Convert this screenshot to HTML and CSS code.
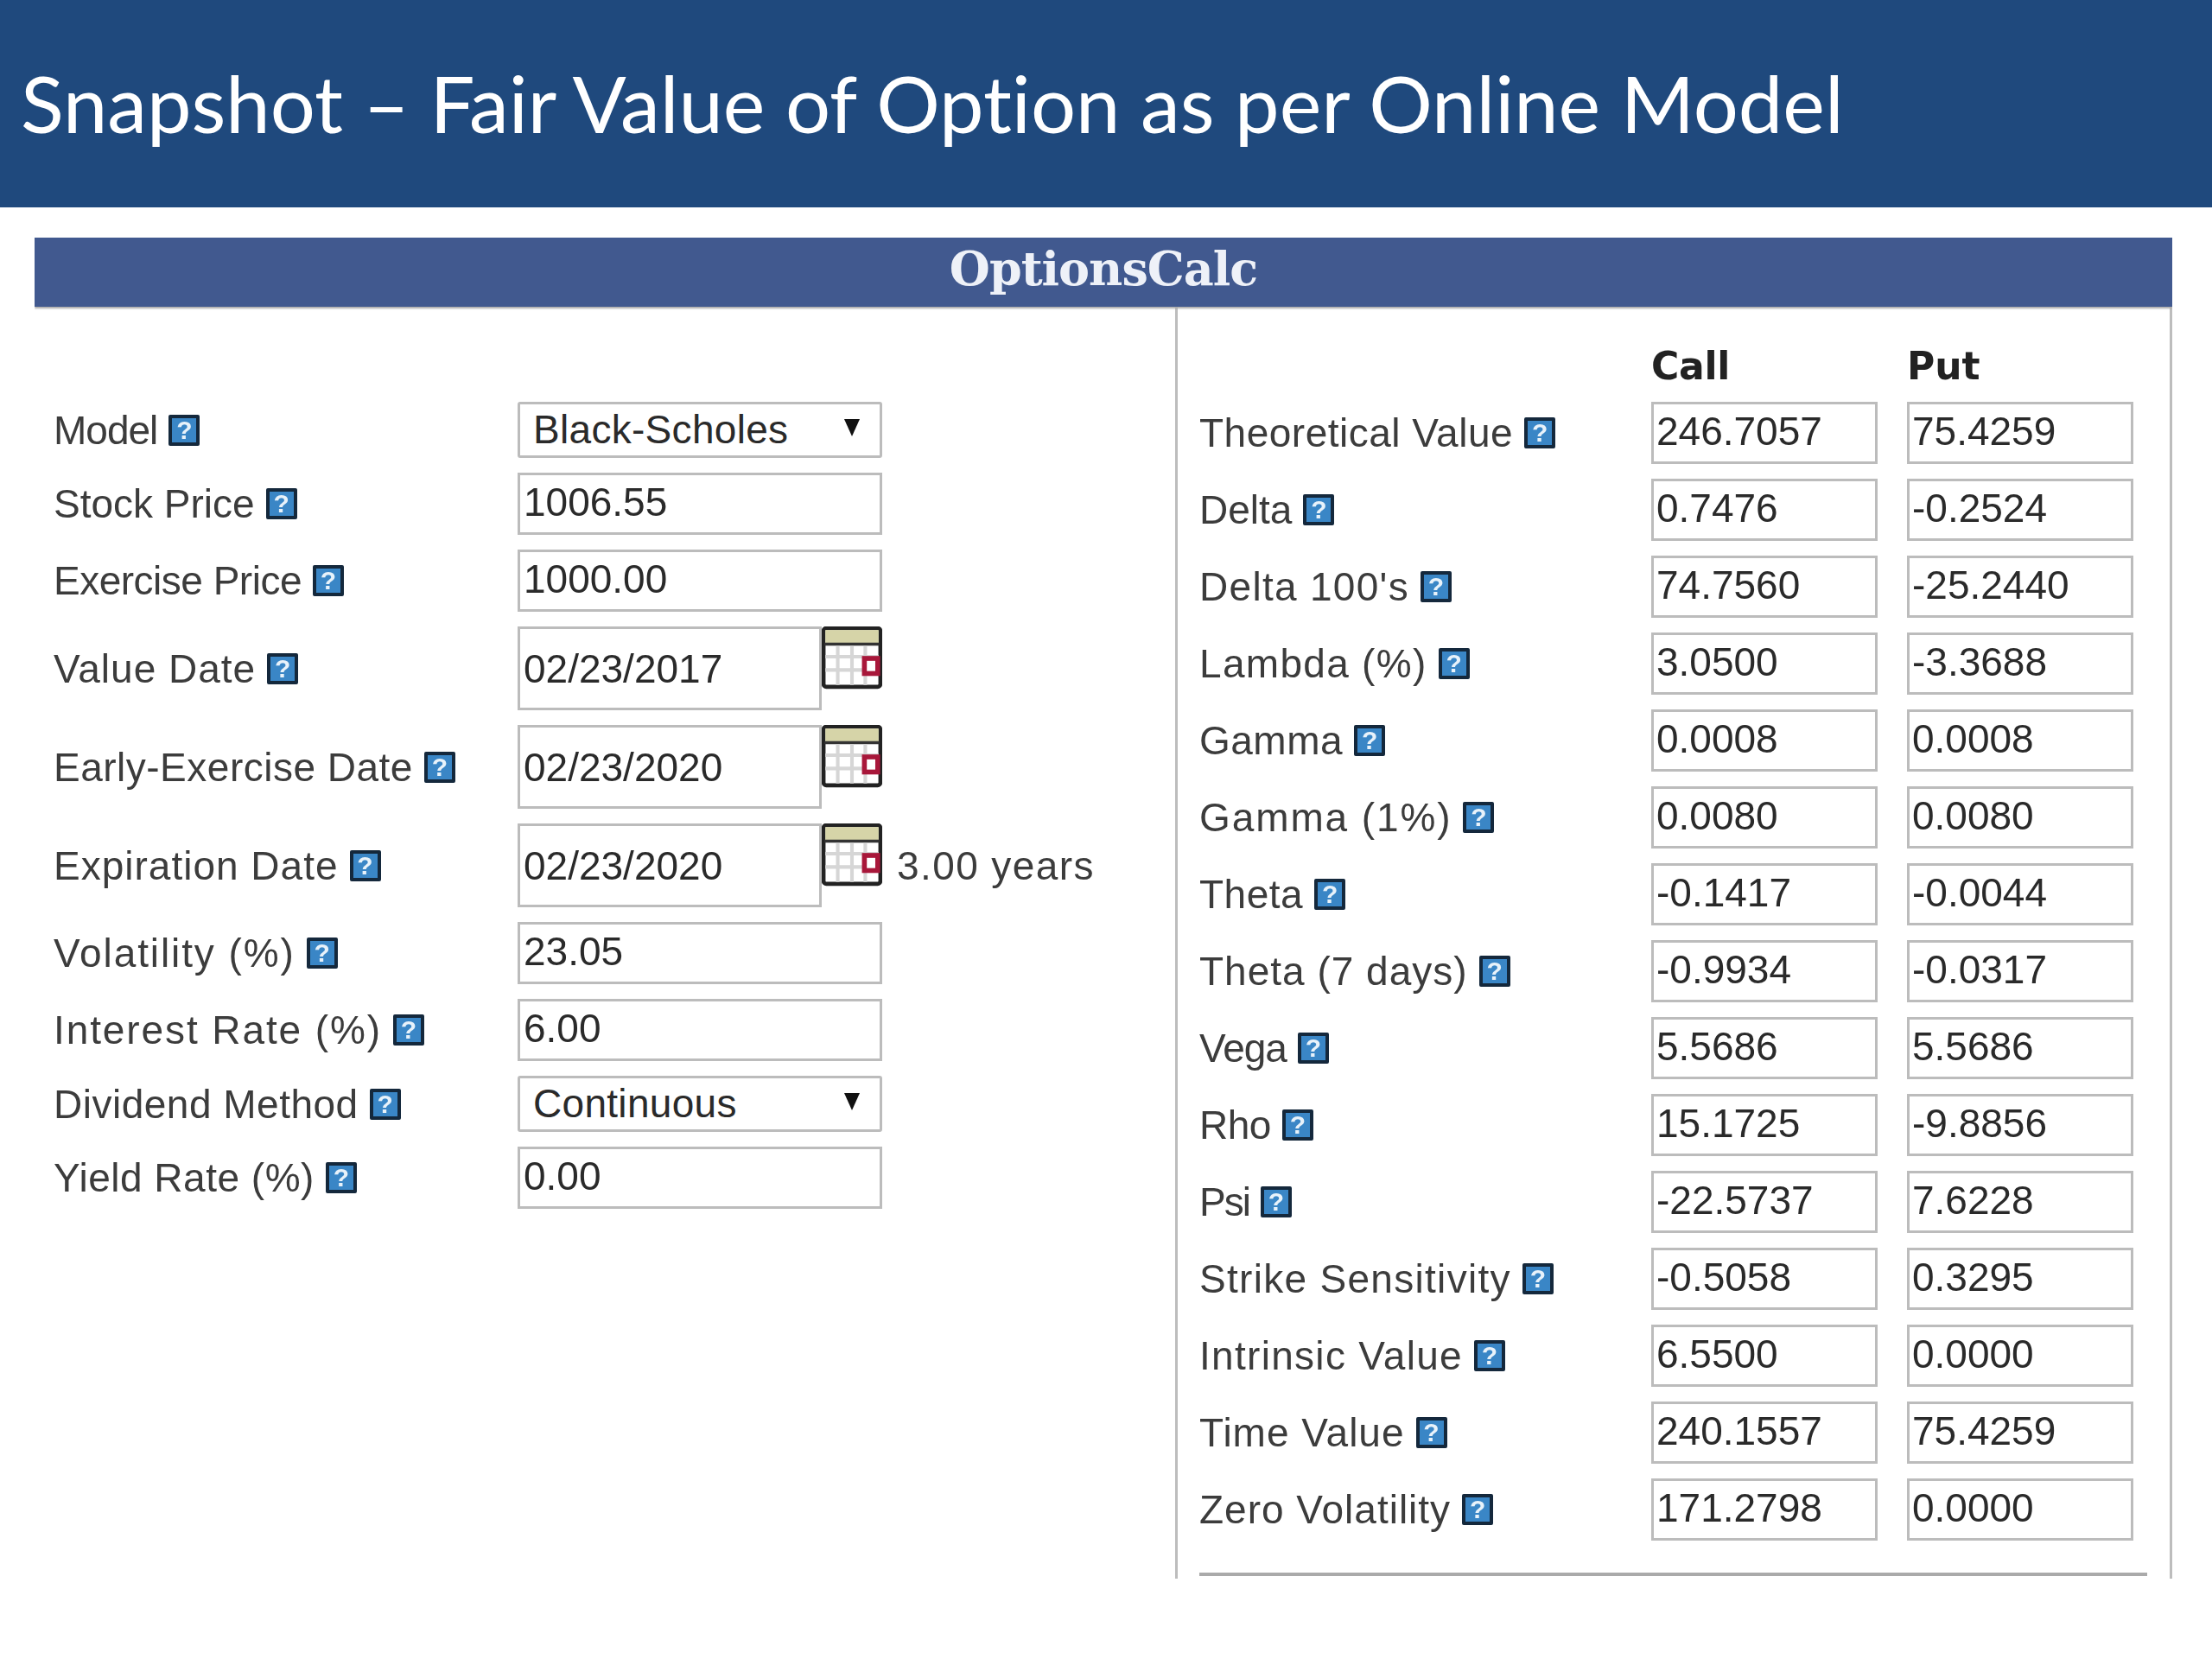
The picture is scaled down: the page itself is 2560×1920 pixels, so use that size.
FILE: index.html
```html
<!DOCTYPE html>
<html lang="en">
<head>
<meta charset="utf-8">
<title>Snapshot – Fair Value of Option as per Online Model</title>
<link rel="stylesheet" href="styles.css">
</head>
<body>
<svg class="defs" width="0" height="0" aria-hidden="true">
  <symbol id="cal" viewBox="0 0 68 72">
    <rect x="2" y="2" width="64" height="66" rx="3" fill="#fff" stroke="#222" stroke-width="4.5"/>
    <rect x="4" y="4" width="60" height="15" fill="#d6d4a8"/>
    <path d="M3 20H65" stroke="#333" stroke-width="3.5"/>
    <path d="M4 34H64M4 49H64M18 22V66M34 22V66M49 22V66" stroke="#d6d6d6" stroke-width="4"/>
    <rect x="48" y="36" width="15" height="17" fill="#fff" stroke="#a8173a" stroke-width="5.5"/>
  </symbol>
</svg>
<header class="slide-head"><h1>Snapshot – Fair Value of Option as per Online Model</h1></header>
<main class="panel">
  <div class="panel-title">OptionsCalc</div>
  <div class="panel-body">
    <section class="inputs">
      <div class="row row-sel"><span class="label t-n1">Model <i class="help">?</i></span><div class="field select">Black-Scholes<b class="arrow"></b></div></div>
      <div class="row"><span class="label">Stock Price <i class="help">?</i></span><div class="field wide">1006.55</div></div>
      <div class="row"><span class="label t-n05">Exercise Price <i class="help">?</i></span><div class="field wide">1000.00</div></div>
      <div class="row row-date"><span class="label t-1">Value Date <i class="help">?</i></span><div class="field date">02/23/2017</div><svg class="cal"><use href="#cal"/></svg></div>
      <div class="row row-date"><span class="label t-05">Early-Exercise Date <i class="help">?</i></span><div class="field date">02/23/2020</div><svg class="cal"><use href="#cal"/></svg></div>
      <div class="row row-date"><span class="label t-1">Expiration Date <i class="help">?</i></span><div class="field date">02/23/2020</div><svg class="cal"><use href="#cal"/></svg><span class="years">3.00 years</span></div>
      <div class="row"><span class="label t-2">Volatility (%) <i class="help">?</i></span><div class="field wide">23.05</div></div>
      <div class="row"><span class="label t-2">Interest Rate (%) <i class="help">?</i></span><div class="field wide">6.00</div></div>
      <div class="row row-sel"><span class="label t-05">Dividend Method <i class="help">?</i></span><div class="field select">Continuous<b class="arrow"></b></div></div>
      <div class="row"><span class="label t-05">Yield Rate (%) <i class="help">?</i></span><div class="field wide">0.00</div></div>
    </section>
    <section class="outputs">
      <div class="out-head"><span></span><b class="call">Call</b><b>Put</b></div>
      <div class="out-row"><span class="label t-05">Theoretical Value <i class="help">?</i></span><div class="field">246.7057</div><div class="field">75.4259</div></div>
      <div class="out-row"><span class="label">Delta <i class="help">?</i></span><div class="field">0.7476</div><div class="field">-0.2524</div></div>
      <div class="out-row"><span class="label t-15">Delta 100's <i class="help">?</i></span><div class="field">74.7560</div><div class="field">-25.2440</div></div>
      <div class="out-row"><span class="label t-15">Lambda (%) <i class="help">?</i></span><div class="field">3.0500</div><div class="field">-3.3688</div></div>
      <div class="out-row"><span class="label t-05">Gamma <i class="help">?</i></span><div class="field">0.0008</div><div class="field">0.0008</div></div>
      <div class="out-row"><span class="label t-2">Gamma (1%) <i class="help">?</i></span><div class="field">0.0080</div><div class="field">0.0080</div></div>
      <div class="out-row"><span class="label t-05">Theta <i class="help">?</i></span><div class="field">-0.1417</div><div class="field">-0.0044</div></div>
      <div class="out-row"><span class="label t-1">Theta (7 days) <i class="help">?</i></span><div class="field">-0.9934</div><div class="field">-0.0317</div></div>
      <div class="out-row"><span class="label t-n1">Vega <i class="help">?</i></span><div class="field">5.5686</div><div class="field">5.5686</div></div>
      <div class="out-row"><span class="label t-n05">Rho <i class="help">?</i></span><div class="field">15.1725</div><div class="field">-9.8856</div></div>
      <div class="out-row"><span class="label t-n2">Psi <i class="help">?</i></span><div class="field">-22.5737</div><div class="field">7.6228</div></div>
      <div class="out-row"><span class="label t-15">Strike Sensitivity <i class="help">?</i></span><div class="field">-0.5058</div><div class="field">0.3295</div></div>
      <div class="out-row"><span class="label t-15">Intrinsic Value <i class="help">?</i></span><div class="field">6.5500</div><div class="field">0.0000</div></div>
      <div class="out-row"><span class="label t-1">Time Value <i class="help">?</i></span><div class="field">240.1557</div><div class="field">75.4259</div></div>
      <div class="out-row"><span class="label t-1">Zero Volatility <i class="help">?</i></span><div class="field">171.2798</div><div class="field">0.0000</div></div>
      <hr class="rule">
    </section>
  </div>
</main>
</body>
</html>
```
FILE: styles.css
```css
* { box-sizing: border-box; }
html, body { margin: 0; background: #fff; }
body { width: 2560px; height: 1920px; overflow: hidden; font-family: "Liberation Sans", Arial, sans-serif; }
.defs { position: absolute; }

.slide-head { height: 240px; background: #1f497d; display: flex; align-items: center; padding: 0 0 3px 24px; }
.slide-head h1 { margin: 0; color: #fff; font: 400 92px/1 Lato, "Open Sans", sans-serif; white-space: nowrap; font-variant-ligatures: none; }

.panel { width: 2474px; height: 1552px; margin: 35px 0 0 40px; overflow: hidden; filter: blur(0.7px); }
.panel-title {
  height: 80px; background: #41598f; color: #eef1f8; text-align: center;
  font: 700 54px/72px "DejaVu Serif", serif; letter-spacing: -1px;
  box-shadow: 0 2px 2px #aaa; position: relative;
}
.panel-body { display: flex; height: 1472px; border-right: 3px solid #bdbdbd; }

.label { color: #3c3c3c; font-size: 46px; white-space: nowrap; display: flex; align-items: center; gap: 13px; }
.t-n2 { letter-spacing: -2px; }
.t-n1 { letter-spacing: -1px; }
.t-n05 { letter-spacing: -.5px; }
.t-05 { letter-spacing: .5px; }
.t-1 { letter-spacing: 1px; }
.t-15 { letter-spacing: 1.3px; }
.t-2 { letter-spacing: 1.9px; }
.help {
  display: inline-block; width: 36px; height: 36px; border: 4px solid #14283c; border-radius: 2px; flex: none;
  background: #3a86c6; color: #e8f2fa; font: 700 30px/28px "Liberation Sans", sans-serif; letter-spacing: 0; text-align: center;
}
.field {
  border: 3px solid #bcbcbc; background: #fff; color: #2a2a2a; font-size: 46px; line-height: 63px;
  height: 72px; padding-left: 3px; white-space: nowrap;
}

.inputs {
  width: 1323px; flex: none; border-right: 3px solid #bdbdbd; padding: 110px 0 0 22px;
  display: flex; flex-direction: column; gap: 17px;
}
.row { display: flex; align-items: center; height: 72px; }
.row .label { width: 537px; flex: none; }
.row-sel { height: 65px; }
.row-date { height: 97px; }
.row .wide { width: 422px; padding-left: 4px; }
.select { width: 422px; height: 100%; position: relative; padding-left: 15px; line-height: 58px; border-radius: 3px; letter-spacing: .3px; }
.arrow {
  position: absolute; right: 23px; top: 17px;
  border-left: 9px solid transparent; border-right: 9px solid transparent; border-top: 20px solid #111;
}
.date { width: 352px; height: 97px; line-height: 92px; padding-left: 4px; }
.cal { width: 70px; height: 74px; align-self: flex-start; flex: none; }
.years { color: #3c3c3c; font-size: 46px; margin-left: 17px; letter-spacing: 1.4px; white-space: nowrap; }

.outputs { flex: 1; padding: 41px 0 0 25px; }
.out-head, .out-row { display: grid; grid-template-columns: 489px 262px 262px; column-gap: 34px; }
.out-head { height: 69px; color: #222; font: 700 44px/56px "DejaVu Sans", sans-serif; }
.out-head .call { letter-spacing: -.3px; }
.out-row { height: 72px; margin-bottom: 17px; align-items: center; }
.rule { border: 0; height: 4px; background: #aaa; margin: 37px 0 0; width: 1097px; }
```
